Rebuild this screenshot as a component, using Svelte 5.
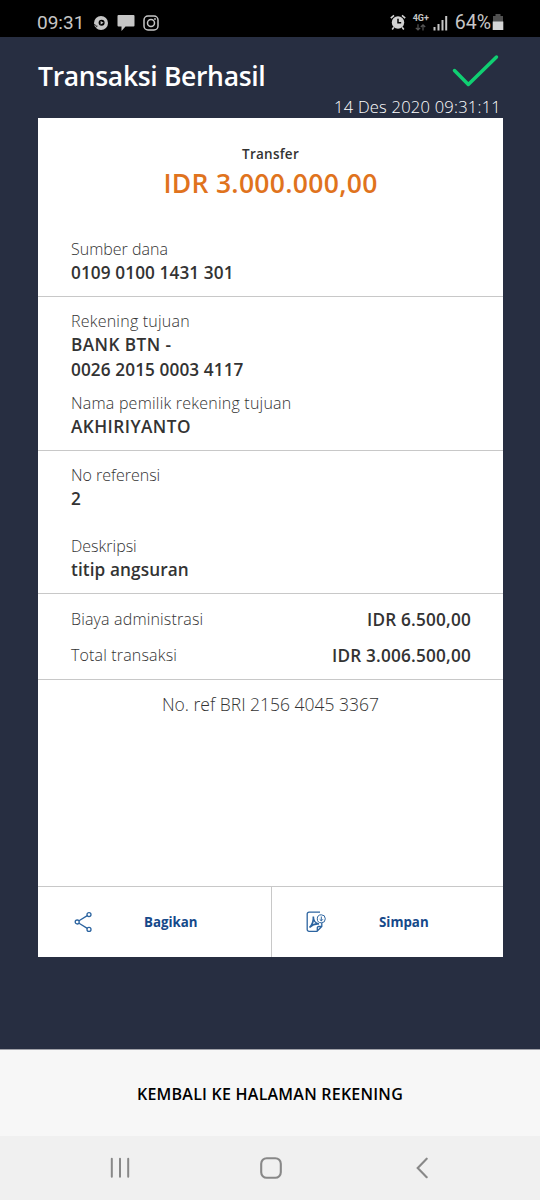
<script>
	const status = { time: '09:31', battery: '64%' };
	const title = 'Transaksi Berhasil';
	const date = '14 Des 2020 09:31:11';

	const sections = [
		{
			name: 'source',
			items: [{ label: 'Sumber dana', values: ['0109 0100 1431 301'] }]
		},
		{
			name: 'target',
			items: [
				{ label: 'Rekening tujuan', values: ['BANK BTN -', '0026 2015 0003 4117'] },
				{ label: 'Nama pemilik rekening tujuan', values: ['AKHIRIYANTO'] }
			]
		},
		{
			name: 'note',
			items: [
				{ label: 'No referensi', values: ['2'] },
				{ label: 'Deskripsi', values: ['titip angsuran'] }
			]
		}
	];

	const costs = [
		{ label: 'Biaya administrasi', value: 'IDR 6.500,00' },
		{ label: 'Total transaksi', value: 'IDR 3.006.500,00' }
	];

	// names in capitals are spaced a little wider than numbers
	const isCaps = (value) => /^[A-Z -]+$/.test(value);
</script>

<div class="screen">
	<div class="statusbar">
		<span class="time">{status.time}</span>
		<svg class="dot" width="16" height="16" viewBox="0 0 16 16">
			<circle cx="8" cy="8" r="7" fill="#c6c6c6" />
			<circle cx="8.6" cy="7.8" r="3" fill="#000" />
			<path d="M7.6 6l3 1.8-3 1.8z" fill="#c6c6c6" />
			<path d="M1 9.5l2.5 1.2M2.2 12.5l2.3-1.4" stroke="#000" stroke-width=".8" />
		</svg>
		<svg class="chat" width="18" height="18" viewBox="0 0 18 18">
			<path d="M1.5 1h15a1 1 0 0 1 1 1v9.6a1 1 0 0 1-1 1H8.5L4.5 17v-4.4h-3a1 1 0 0 1-1-1V2a1 1 0 0 1 1-1z" fill="#c6c6c6" />
		</svg>
		<svg class="insta" width="16" height="16" viewBox="0 0 16 16" fill="none" stroke="#c6c6c6" stroke-width="1.5">
			<rect x="1" y="1" width="14" height="14" rx="4" />
			<circle cx="8" cy="8" r="3.5" />
			<circle cx="12" cy="4" r=".9" fill="#c6c6c6" stroke="none" />
		</svg>
		<span class="space"></span>
		<svg class="alarm" width="16" height="17" viewBox="0 0 16 17" fill="none">
			<circle cx="8" cy="8.5" r="6.2" fill="#d2d2d2" />
			<path d="M8 4.8v4h3.2" stroke="#000" stroke-width="1.5" />
			<path d="M.8 4.2L4 1.3M15.2 4.2L12 1.3" stroke="#d2d2d2" stroke-width="1.6" />
			<path d="M3.8 13.3l-1.6 2.2M12.2 13.3l1.6 2.2" stroke="#d2d2d2" stroke-width="1.6" />
		</svg>
		<div class="net">
			<span>4G+</span>
			<svg width="11" height="7" viewBox="0 0 11 7" fill="none" stroke="#555" stroke-width="1.2">
				<path d="M3 .3v5.5M.8 3.8L3 6l2.200-2.200M8 6.500V1M5.800 3L8 .9 10.200 3" />
			</svg>
		</div>
		<svg class="signal" width="15" height="16" viewBox="0 0 15 16" fill="#c6c6c6">
			<path d="M.5 12h2v3.5h-2zM4.5 9h2v6.5h-2zM8.500 5h2v10.500h-2zM12.200 1h2v14.500h-2z" />
		</svg>
		<span class="battery">{status.battery}</span>
		<svg class="cell" width="12" height="17" viewBox="0 0 12 17">
			<path d="M3.5 0h5v2H11v6H1V2h2.500z" fill="#505050" />
			<path d="M.7 7.500h10.600V16H.7z" fill="#d6d6d6" />
		</svg>
	</div>

	<header>
		<h1>{title}</h1>
		<div class="done">
			<svg width="48" height="36" viewBox="0 0 48 36" fill="none">
				<path d="M3.500 17.500L17.300 31.500 45.500 4" stroke="#10cf72" stroke-width="3.500" stroke-linecap="round" stroke-linejoin="round" />
			</svg>
			<span class="date">{date}</span>
		</div>
	</header>

	<main class="card">
		<div class="hero">
			<p class="kind">Transfer</p>
			<p class="amount">IDR 3.000.000,00</p>
		</div>

		{#each sections as section}
			<section class={section.name}>
				{#each section.items as item}
					<div class="item">
						<p class="label">{item.label}</p>
						{#each item.values as value}
							<p class="value" class:caps={isCaps(value)}>{value}</p>
						{/each}
					</div>
				{/each}
			</section>
		{/each}

		<section class="costs">
			{#each costs as cost}
				<div class="row">
					<span class="label">{cost.label}</span>
					<span class="value">{cost.value}</span>
				</div>
			{/each}
		</section>

		<p class="ref">No. ref BRI 2156 4045 3367</p>

		<div class="actions">
			<button>
				<svg width="20" height="22" viewBox="0 0 20 22" fill="none" stroke="#2c64a0" stroke-width="1.3">
					<path d="M5 9.800l8.300-5.200M5 12.200l8.300 5.200" />
					<circle cx="3.200" cy="11" r="2" />
					<circle cx="15" cy="3.600" r="2" />
					<circle cx="15" cy="18.400" r="2" />
				</svg>
				<span>Bagikan</span>
			</button>
			<button>
				<svg width="20" height="22" viewBox="0 0 20 22" fill="none" stroke="#2c64a0" stroke-width="1.3">
					<path d="M14 1.200H3A1.800 1.800 0 0 0 1.200 3v15.500A1.800 1.800 0 0 0 3 20.300h8l4.800-4.800v-3.500M15.800 15.500H12.500a1.200 1.200 0 0 0-1.200 1.200v3.600" />
					<path d="M3.500 16.500C6 14 7.800 10 7.300 5.500c0 4 2.500 7 5.700 7.500-3-.5-6 .2-9.500 3.500z" stroke-width="1.600" />
					<circle cx="15.300" cy="7.800" r="4" fill="#fff" stroke-width="1" />
					<path d="M15.300 5.500v4.300M13.700 8.300l1.600 1.600 1.600-1.600" stroke-width="1" />
				</svg>
				<span>Simpan</span>
			</button>
		</div>
	</main>

	<button class="back">KEMBALI KE HALAMAN REKENING</button>

	<nav>
		<svg width="20" height="22" viewBox="0 0 20 22" stroke="#888" stroke-width="2" stroke-linecap="round">
			<path d="M1.800 1.700v18M10 1.700v18M18.200 1.700v18" />
		</svg>
		<svg class="home" width="22" height="22" viewBox="0 0 22 22" fill="none" stroke="#888" stroke-width="2.100">
			<rect x="1.200" y="1.200" width="19.600" height="19.600" rx="5.500" />
		</svg>
		<svg width="12" height="22" viewBox="0 0 12 22" fill="none" stroke="#888" stroke-width="2.100" stroke-linecap="round">
			<path d="M10.700 1.700L1.700 11l9 9.200" />
		</svg>
	</nav>
</div>

<style>
:global(body) {
	margin: 0;
	background: #272e41;
}
p, h1 {
	margin: 0;
}
svg {
	display: block;
	flex: none;
}
button {
	margin: 0;
	padding: 0;
	border: 0;
	background: none;
	font-family: inherit;
}
.screen {
	display: flex;
	flex-direction: column;
	width: 540px;
	height: 1200px;
	background: #272e41;
	font-family: "Open Sans", "Noto Sans", sans-serif;
	white-space: nowrap;
}
.statusbar {
	display: flex;
	align-items: center;
	box-sizing: border-box;
	height: 37px;
	padding: 8px 36px 0 37px;
	background: #000;
	color: #c6c6c6;
	font-family: Roboto, sans-serif;
	font-size: 19px;
}
.time {
	width: 56px;
}
.chat {
	margin: 1px 8px 0;
}
.space {
	flex: 1;
}
.net {
	display: flex;
	flex-direction: column;
	align-items: center;
	gap: 1px;
	width: 16px;
	margin: 0 4px 0 7px;
	font-size: 9px;
	font-weight: 700;
	line-height: 9px;
}
.battery {
	margin-left: 7px;
	font-size: 19.5px;
}
.cell {
	margin-left: 1px;
}
header {
	display: flex;
	justify-content: space-between;
	height: 81px;
	padding: 0 39px 0 38px;
	color: #fff;
}
h1 {
	margin-top: 21px;
	font-size: 26.5px;
	font-weight: 600;
	line-height: 36px;
	letter-spacing: -.33px;
}
.done {
	display: flex;
	flex-direction: column;
	align-items: flex-end;
	padding-top: 16px;
}
.done svg {
	margin-right: 2px;
}
.date {
	margin-top: 6px;
	font-size: 16.5px;
	font-weight: 300;
	line-height: 24px;
	letter-spacing: .24px;
}
.card {
	display: flex;
	flex-direction: column;
	width: 465px;
	height: 839px;
	margin-left: 38px;
	background: #fff;
	color: #333;
}
.hero {
	height: 107px;
	padding-top: 26px;
	box-sizing: border-box;
	text-align: center;
}
.kind {
	font-size: 13.5px;
	font-weight: 600;
	line-height: 21px;
	letter-spacing: .25px;
}
.amount {
	color: #e0731d;
	font-size: 26.5px;
	font-weight: 600;
	line-height: 36px;
	letter-spacing: .3px;
}
section {
	box-sizing: border-box;
	padding: 12px 32px 0 33px;
	border-bottom: 1px solid #c8c8c8;
}
.label {
	font-size: 16px;
	font-weight: 300;
	line-height: 24px;
}
.value {
	font-size: 17.2px;
	font-weight: 600;
	line-height: 24.5px;
	letter-spacing: .1px;
}
.value.caps {
	letter-spacing: .45px;
}
.source {
	height: 72px;
}
.target {
	height: 154px;
}
.target .item {
	margin-bottom: 9px;
}
.target .label {
	letter-spacing: .22px;
}
.note {
	height: 143px;
}
.note .item {
	margin-bottom: 22px;
}
.costs {
	height: 86px;
	padding-top: 13px;
}
.costs .label {
	letter-spacing: .16px;
}
.costs .value {
	letter-spacing: .2px;
	line-height: 25px;
}
.row {
	display: flex;
	justify-content: space-between;
	margin-bottom: 11px;
}
.ref {
	flex: 1;
	padding-top: 12px;
	font-size: 17.5px;
	font-weight: 300;
	line-height: 25px;
	text-align: center;
}
.actions {
	display: flex;
	height: 70px;
	border-top: 1px solid #c8c8c8;
}
.actions button {
	display: flex;
	align-items: center;
	flex: 1;
	padding-left: 36px;
	color: #16498a;
	font-size: 13.3px;
	font-weight: 700;
}
.actions button + button {
	border-left: 1px solid #c8c8c8;
	padding-left: 34px;
}
.actions span {
	margin-left: 50px;
}
.actions button + button span {
	margin-left: 53px;
}
.back {
	height: 87px;
	margin-top: 92px;
	padding-top: 2px;
	border-top: 1px solid #a0a1a8;
	background: #f7f7f7;
	color: #000;
	font-size: 16px;
	font-weight: 600;
	letter-spacing: .23px;
}
nav {
	display: flex;
	align-items: center;
	justify-content: space-between;
	box-sizing: border-box;
	height: 64px;
	padding: 0 112px 0 110px;
	background: #f0f0f0;
}
.home {
	margin-right: 4px;
}
</style>
